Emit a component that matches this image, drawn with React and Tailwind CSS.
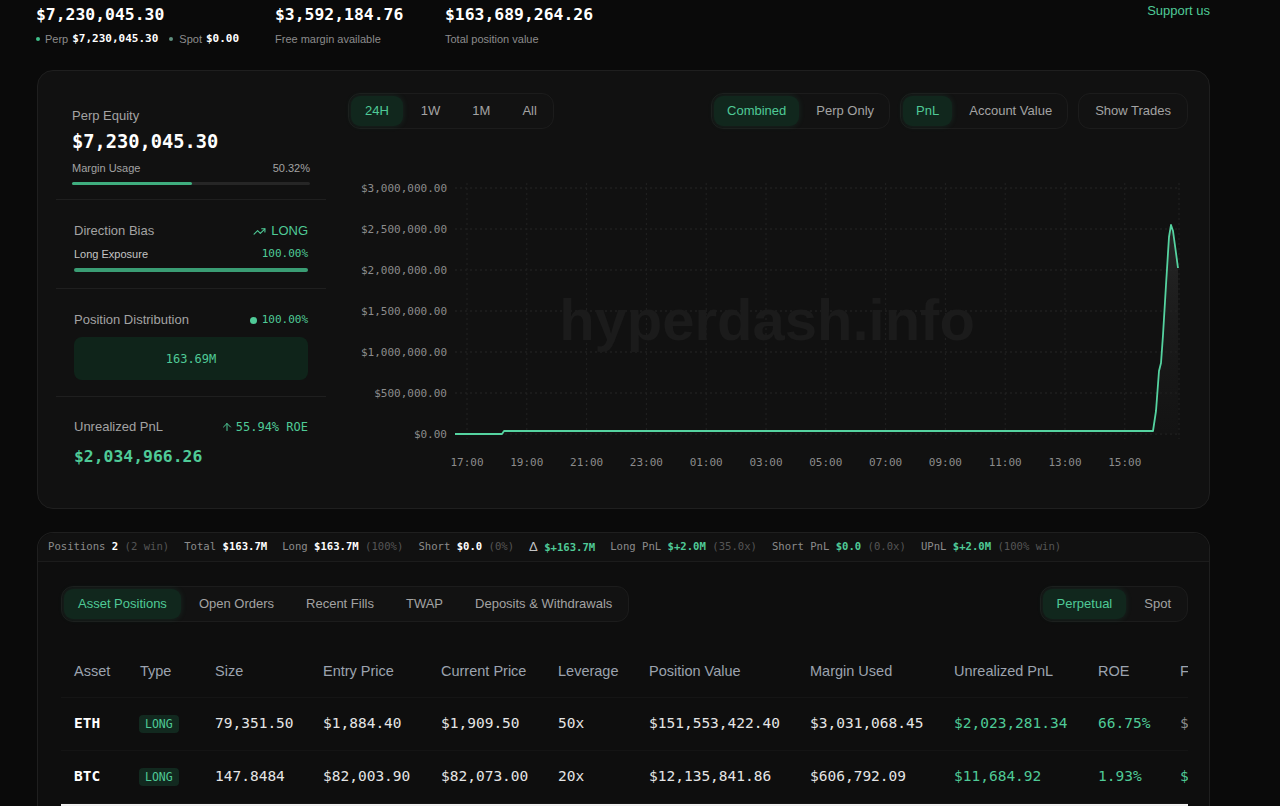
import React from "react";
import { TrendingUp, ArrowUp } from "lucide-react";

const MONO = "font-['DejaVu_Sans_Mono','Liberation_Mono',monospace]";

function Pill({ items, active, px = "px-[14px]" }) {
  return (
    <div className="flex items-center gap-[4px] rounded-xl border border-[#1c1c1c] bg-[#121212] p-[2px]">
      {items.map((t) => (
        <div
          key={t}
          className={
            "h-[30px] flex items-center rounded-[9px] text-[13px] whitespace-nowrap " +
            px +
            " " +
            (t === active
              ? "bg-[#11271d] text-[#4fca97] shadow-[0_0_6px_rgba(60,200,140,0.12)]"
              : "text-[#a3a3a3]")
          }
        >
          {t}
        </div>
      ))}
    </div>
  );
}

function Chart() {
  const yTicks = [
    ["$3,000,000.00", 13],
    ["$2,500,000.00", 54],
    ["$2,000,000.00", 95],
    ["$1,500,000.00", 136],
    ["$1,000,000.00", 177],
    ["$500,000.00", 218],
    ["$0.00", 259],
  ];
  const xTicks = ["17:00", "19:00", "21:00", "23:00", "01:00", "03:00", "05:00", "07:00", "09:00", "11:00", "13:00", "15:00"];
  const line =
    "M107,259 L154,259 L156,256 L805,256 L808,236 L811,196 L813,188 L815,160 L818,110 L821,62 L823,50 L825,56 L828,78 L830,93";
  return (
    <svg width="840" height="300" className="block">
      <defs>
        <linearGradient id="fillg" x1="0" y1="0" x2="0" y2="1">
          <stop offset="0%" stopColor="#2a2a2a" stopOpacity="0.9" />
          <stop offset="100%" stopColor="#161616" stopOpacity="0.4" />
        </linearGradient>
      </defs>
      {yTicks.map(([, y]) => (
        <line key={y} x1="107" x2="832" y1={y} y2={y} stroke="#262626" strokeDasharray="2 3" />
      ))}
      {xTicks.map((_, i) => (
        <line key={i} x1={119 + i * 59.8} x2={119 + i * 59.8} y1="8" y2="264" stroke="#222" strokeDasharray="2 3" />
      ))}
      <line x1="831" x2="831" y1="8" y2="264" stroke="#222" strokeDasharray="2 3" />
      <text
        x="419"
        y="165"
        textAnchor="middle"
        fontSize="58"
        fontWeight="700"
        fill="#1b1b1b"
        fontFamily="Liberation Sans, Arial, sans-serif"
      >
        hyperdash.info
      </text>
      <path d={line + " L830,259 L805,259 Z"} fill="url(#fillg)" />
      <path d={line} fill="none" stroke="#55d3a0" strokeWidth="1.8" strokeLinejoin="round" />
      {yTicks.map(([t, y]) => (
        <text key={t} x="99" y={y + 4} textAnchor="end" fontSize="11" fill="#8c8c8c" fontFamily="DejaVu Sans Mono, monospace">
          {t}
        </text>
      ))}
      {xTicks.map((t, i) => (
        <text key={t} x={119 + i * 59.8} y="291" textAnchor="middle" fontSize="11" fill="#8c8c8c" fontFamily="DejaVu Sans Mono, monospace">
          {t}
        </text>
      ))}
    </svg>
  );
}

const COLS = "grid grid-cols-[66px_75px_108px_118px_117px_91px_161px_144px_144px_82px_120px]";

const rows = [
  {
    asset: "ETH",
    size: "79,351.50",
    entry: "$1,884.40",
    cur: "$1,909.50",
    lev: "50x",
    value: "$151,553,422.40",
    margin: "$3,031,068.45",
    pnl: "$2,023,281.34",
    roe: "66.75%",
    last: "$",
    lastGreen: false,
  },
  {
    asset: "BTC",
    size: "147.8484",
    entry: "$82,003.90",
    cur: "$82,073.00",
    lev: "20x",
    value: "$12,135,841.86",
    margin: "$606,792.09",
    pnl: "$11,684.92",
    roe: "1.93%",
    last: "$",
    lastGreen: true,
  },
];

export default function App() {
  return (
    <div className="h-[806px] overflow-hidden bg-[#0a0a0a] font-['Liberation_Sans',Arial,sans-serif] text-[#e5e5e5]">
      <div className="ml-[36px] w-[1174px]">
        {/* header stats */}
        <div className="flex items-start justify-between pt-[4px]">
          <div className="flex">
            <div className="w-[239px]">
              <div className={MONO + " text-[16.4px] font-bold leading-[22px] text-white"}>$7,230,045.30</div>
              <div className="mt-[5px] flex items-center text-[11px] leading-[16px] text-[#8c8c8c]">
                <span className="mr-[5px] h-[4px] w-[4px] rounded-full bg-[#3fbf8a]" />
                Perp
                <span className={MONO + " ml-[4px] font-bold text-white"}>$7,230,045.30</span>
                <span className="ml-[11px] mr-[6px] h-[4px] w-[4px] rounded-full bg-[#5f8f7f]" />
                Spot
                <span className={MONO + " ml-[4px] font-bold text-white"}>$0.00</span>
              </div>
            </div>
            <div className="w-[170px]">
              <div className={MONO + " text-[16.4px] font-bold leading-[22px] text-white"}>$3,592,184.76</div>
              <div className="mt-[5px] text-[11px] leading-[16px] text-[#8c8c8c]">Free margin available</div>
            </div>
            <div>
              <div className={MONO + " text-[16.4px] font-bold leading-[22px] text-white"}>$163,689,264.26</div>
              <div className="mt-[5px] text-[11px] leading-[16px] text-[#8c8c8c]">Total position value</div>
            </div>
          </div>
          <div className="-mt-[2px] text-[13px] leading-[18px] text-[#4fca97]">Support us</div>
        </div>

        {/* main card */}
        <div className="mt-[23px] ml-[1px] flex h-[439px] rounded-2xl border border-[#1f1f1f] bg-[#111111] pl-[18px] pr-[21px] pt-[22px]">
          {/* left panel */}
          <div className="w-[270px] shrink-0">
            <div className="border-b border-[#1f1f1f] px-4 pt-[14px] pb-[14px]">
              <div className="text-[13px] leading-[18px] text-[#a3a3a3]">Perp Equity</div>
              <div className={MONO + " mt-[4px] text-[18.7px] font-bold leading-[26px] text-white"}>$7,230,045.30</div>
              <div className="mt-[5px] flex justify-between text-[11px] leading-[16px] text-[#a3a3a3]">
                <span>Margin Usage</span>
                <span>50.32%</span>
              </div>
              <div className="mt-[6px] h-[3px] rounded-full bg-[#262626]">
                <div className="h-full w-[50.32%] rounded-full bg-[#3fae7f]" />
              </div>
            </div>
            <div className="border-b border-[#1f1f1f] px-[18px] pt-[22px] pb-[16px]">
              <div className="flex items-center justify-between text-[13px] leading-[18px]">
                <span className="text-[#a3a3a3]">Direction Bias</span>
                <span className="flex items-center gap-[5px] text-[#4fca97]">
                  <TrendingUp size={13} strokeWidth={2} />
                  LONG
                </span>
              </div>
              <div className="mt-[6px] flex justify-between text-[11px] leading-[16px]">
                <span className="text-[#c4c4c4]">Long Exposure</span>
                <span className={MONO + " text-[#4fca97]"}>100.00%</span>
              </div>
              <div className="mt-[6px] h-[4px] rounded-full bg-[#3a9d74]" />
            </div>
            <div className="border-b border-[#1f1f1f] px-[18px] pt-[22px] pb-[16px]">
              <div className="flex items-center justify-between text-[13px] leading-[18px]">
                <span className="text-[#a3a3a3]">Position Distribution</span>
                <span className={MONO + " flex items-center gap-[5px] text-[11px] text-[#4fca97]"}>
                  <span className="h-[7px] w-[7px] rounded-full bg-[#4fca97]" />
                  100.00%
                </span>
              </div>
              <div className={MONO + " mt-[8px] flex h-[43px] items-center justify-center rounded-lg bg-[#0f241a] text-[12px] text-[#4fca97]"}>
                163.69M
              </div>
            </div>
            <div className="px-[18px] pt-[21px]">
              <div className="flex items-center justify-between text-[13px] leading-[18px]">
                <span className="text-[#a3a3a3]">Unrealized PnL</span>
                <span className={MONO + " flex items-center gap-[3px] text-[12px] text-[#4fca97]"}>
                  <ArrowUp size={12} strokeWidth={2} />
                  55.94% ROE
                </span>
              </div>
              <div className={MONO + " mt-[9px] text-[16.4px] font-bold leading-[24px] text-[#4fca97]"}>$2,034,966.26</div>
            </div>
          </div>

          {/* chart panel */}
          <div className="ml-[22px] flex-1">
            <div className="flex items-center justify-between">
              <Pill items={["24H", "1W", "1M", "All"]} active="24H" />
              <div className="flex items-center gap-[10px]">
                <Pill items={["Combined", "Perp Only"]} active="Combined" px="px-[13px]" />
                <Pill items={["PnL", "Account Value"]} active="PnL" px="px-[13px]" />
                <Pill items={["Show Trades"]} active="" />
              </div>
            </div>
            <div className="mt-[46px]">
              <Chart />
            </div>
          </div>
        </div>

        {/* positions card */}
        <div className="mt-[23px] ml-[1px] rounded-t-2xl border border-b-0 border-[#1f1f1f] bg-[#0e0e0e]">
          <div className={MONO + " flex h-[29px] items-center gap-[15px] rounded-t-2xl border-b border-[#1c1c1c] bg-[#111111] px-[10px] text-[10.6px] text-[#8c8c8c]"}>
            <span>
              Positions <b className="text-white">2</b> <span className="text-[#555]">(2 win)</span>
            </span>
            <span>
              Total <b className="text-white">$163.7M</b>
            </span>
            <span>
              Long <b className="text-white">$163.7M</b> <span className="text-[#555]">(100%)</span>
            </span>
            <span>
              Short <b className="text-white">$0.0</b> <span className="text-[#555]">(0%)</span>
            </span>
            <span>
              <span className="font-['Liberation_Sans',sans-serif] text-[13px] text-[#c4c4c4]">Δ</span>{" "}
              <b className="text-[#4fca97]">$+163.7M</b>
            </span>
            <span>
              Long PnL <b className="text-[#4fca97]">$+2.0M</b> <span className="text-[#555]">(35.0x)</span>
            </span>
            <span>
              Short PnL <b className="text-[#4fca97]">$0.0</b> <span className="text-[#555]">(0.0x)</span>
            </span>
            <span>
              UPnL <b className="text-[#4fca97]">$+2.0M</b> <span className="text-[#555]">(100% win)</span>
            </span>
          </div>

          <div className="pl-[23px] pr-[21px] pt-[24px]">
            <div className="flex items-center justify-between">
              <Pill items={["Asset Positions", "Open Orders", "Recent Fills", "TWAP", "Deposits & Withdrawals"]} active="Asset Positions" />
              <Pill items={["Perpetual", "Spot"]} active="Perpetual" />
            </div>

            <div className="mt-[24px] overflow-hidden">
              <div className={COLS + " h-[52px] items-center border-b border-[#151515] text-[14.5px] text-[#9ca3af]"}>
                {["Asset", "Type", "Size", "Entry Price", "Current Price", "Leverage", "Position Value", "Margin Used", "Unrealized PnL", "ROE", "F"].map((h) => (
                  <div key={h} className="pl-[13px] whitespace-nowrap">
                    {h}
                  </div>
                ))}
              </div>
              {rows.map((r) => (
                <div key={r.asset} className={COLS + " " + MONO + " h-[53px] items-center border-b border-[#141414] text-[14.5px] text-[#e5e5e5]"}>
                  <div className="pl-[13px] font-bold text-white">{r.asset}</div>
                  <div className="pl-[12px]">
                    <span className="rounded-[4px] bg-[#12291f] px-[6px] py-[2px] text-[11.5px] text-[#4fca97]">LONG</span>
                  </div>
                  <div className="pl-[13px]">{r.size}</div>
                  <div className="pl-[13px]">{r.entry}</div>
                  <div className="pl-[13px]">{r.cur}</div>
                  <div className="pl-[13px]">{r.lev}</div>
                  <div className="pl-[13px]">{r.value}</div>
                  <div className="pl-[13px]">{r.margin}</div>
                  <div className="pl-[13px] text-[#4fca97]">{r.pnl}</div>
                  <div className="pl-[13px] text-[#4fca97]">{r.roe}</div>
                  <div className={"pl-[13px] " + (r.lastGreen ? "text-[#4fca97]" : "text-[#8c8c8c]")}>{r.last}</div>
                </div>
              ))}
              <div className="h-[6px] border-t border-[#f5f5f5] bg-[#f0f0f0]">
                <div className="ml-[17px] mt-[1px] h-[4px] w-[931px] bg-[#bdbdbd]" />
              </div>
            </div>
          </div>
        </div>
      </div>
    </div>
  );
}
